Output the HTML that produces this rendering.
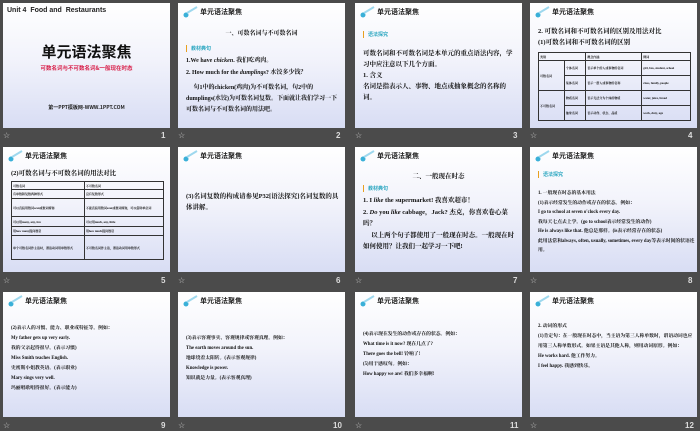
<!DOCTYPE html><html><head><meta charset="utf-8"><style>
*{margin:0;padding:0;box-sizing:border-box}
body{width:700px;height:431px;background:#4b4b4b;position:relative;overflow:hidden;font-family:"Liberation Serif","Noto Serif CJK SC","Noto Sans CJK SC",serif;color:#111}
.s{position:absolute;width:167px;height:125px;background:linear-gradient(#fff 0%,#f2f3fb 45%,#d8ddf4 100%);overflow:hidden;font-weight:bold}
.n{position:absolute;color:#ddd;font:bold 8px "Liberation Sans",sans-serif}
.st{position:absolute;color:#ccc;font:8px "Liberation Sans",sans-serif}
.h{position:absolute;left:22px;top:4px;font:bold 7px "Noto Sans CJK SC",sans-serif;color:#222}
.ic{position:absolute;left:4px;top:3px;width:16px;height:12px}
.t{position:absolute;font-size:6px;line-height:9px}
.tag{position:absolute;font:bold 5px "Noto Sans CJK SC",sans-serif;color:#2aa6c0;padding-left:4px;border-left:1.5px solid #e8a020}
table{border-collapse:collapse;position:absolute;font-size:3px}
td{border:0.7px solid #333;padding:1px;vertical-align:middle}
</style></head><body>
<div class="s" style="left:3px;top:3px">
<div style="position:absolute;left:4px;top:4px;font:bold 7px 'Liberation Sans',sans-serif;color:#222">Unit 4 &nbsp;Food and &nbsp;Restaurants</div>
<div style="position:absolute;left:0;width:167px;top:38px;text-align:center;font:bold 15px 'Noto Sans CJK SC',sans-serif;color:#111">单元语法聚焦</div>
<div style="position:absolute;left:0;width:167px;top:61px;text-align:center;font:bold 5.5px 'Noto Sans CJK SC',sans-serif;color:#d8204a">可数名词与不可数名词&amp;一般现在时态</div>
<div style="position:absolute;left:0;width:167px;top:101px;text-align:center;font:bold 5px 'Noto Sans CJK SC',sans-serif;color:#222">第一PPT模板网-WWW.1PPT.COM</div>
</div>
<div class="st" style="left:3px;top:131px">☆</div><div class="n" style="left:161px;top:131px">1</div>

<div class="s" style="left:178px;top:3px">
<svg class="ic"><circle cx="4" cy="9" r="2.5" fill="#3ab0d8"/><path d="M5 7 L15 1" stroke="#9ed8ee" stroke-width="2"/></svg>
<div class="h">单元语法聚焦</div>
<div class="t" style="left:0;width:167px;text-align:center;top:27px">一、可数名词与不可数名词</div>
<div class="tag" style="left:8px;top:42px">教材典句</div>
<div class="t" style="left:8px;top:54px">1.We have <i>chicken</i>. 我们吃鸡肉。</div>
<div class="t" style="left:8px;top:66px">2. How much for the <i>dumplings</i>? 水饺多少钱？</div>
<div class="t" style="left:8px;top:80px;width:155px;line-height:11px">&nbsp;&nbsp;&nbsp;&nbsp;&nbsp;句1中的chicken(鸡肉)为不可数名词，句2中的dumplings(水饺)为可数名词复数。下面就让我们学习一下可数名词与不可数名词的用法吧。</div>
</div>
<div class="st" style="left:178px;top:131px">☆</div><div class="n" style="left:336px;top:131px">2</div>

<div class="s" style="left:355px;top:3px">
<svg class="ic"><circle cx="4" cy="9" r="2.5" fill="#3ab0d8"/><path d="M5 7 L15 1" stroke="#9ed8ee" stroke-width="2"/></svg>
<div class="h">单元语法聚焦</div>
<div class="tag" style="left:8px;top:28px">语法探究</div>
<div class="t" style="left:8px;top:45px;width:155px;line-height:11px;font-size:6.5px">可数名词和不可数名词是本单元的重点语法内容，学习中应注意以下几个方面。<br>1. 含义<br>名词是指表示人、事物、地点或抽象概念的名称的词。</div>
</div>
<div class="st" style="left:355px;top:131px">☆</div><div class="n" style="left:513px;top:131px">3</div>

<div class="s" style="left:530px;top:3px">
<svg class="ic"><circle cx="4" cy="9" r="2.5" fill="#3ab0d8"/><path d="M5 7 L15 1" stroke="#9ed8ee" stroke-width="2"/></svg>
<div class="h">单元语法聚焦</div>
<div class="t" style="left:8px;top:24px;font-size:6.5px">2. 可数名词和不可数名词的区别及用法对比</div>
<div class="t" style="left:8px;top:35px;font-size:6.5px">(1)可数名词和不可数名词的区别</div>
<table style="left:8px;top:49px;width:153px;height:69px"><tr style="height:8px"><td colspan="2">类别</td><td>概念内涵</td><td>例词</td></tr>
<tr><td rowspan="2">可数名词</td><td>个体名词</td><td>表示单个的人或事物的名词</td><td>girl, bus, student, school</td></tr>
<tr><td>集体名词</td><td>表示一群人或事物的名称</td><td>class, family, people</td></tr>
<tr><td rowspan="2">不可数名词</td><td>物质名词</td><td>表示无法分为个体的物质</td><td>water, juice, bread</td></tr>
<tr><td>抽象名词</td><td>表示动作、状态、品质</td><td>work, duty, age</td></tr></table>
</div>
<div class="st" style="left:530px;top:131px">☆</div><div class="n" style="left:688px;top:131px">4</div>

<div class="s" style="left:3px;top:147px">
<svg class="ic"><circle cx="4" cy="9" r="2.5" fill="#3ab0d8"/><path d="M5 7 L15 1" stroke="#9ed8ee" stroke-width="2"/></svg>
<div class="h">单元语法聚焦</div>
<div class="t" style="left:8px;top:22px;font-size:6.5px">(2)可数名词与不可数名词的用法对比</div>
<table style="left:8px;top:34px;width:153px;height:79px"><tr style="height:8px"><td>可数名词</td><td>不可数名词</td></tr>
<tr style="height:9px"><td>有单数和复数两种形式</td><td>没有复数形式</td></tr>
<tr style="height:18px"><td>可以直接用数词a/an或数词修饰</td><td>不能直接用数词a/an或数词修饰，可以借助单位词</td></tr>
<tr style="height:10px"><td>可以用many, any, few</td><td>可以用much, any, little</td></tr>
<tr style="height:9px"><td>用how many提问数量</td><td>用how much提问数量</td></tr>
<tr><td>单个可数名词作主语时，谓语动词用单数形式</td><td>不可数名词作主语，谓语动词用单数形式</td></tr></table>
</div>
<div class="st" style="left:3px;top:276px">☆</div><div class="n" style="left:161px;top:276px">5</div>

<div class="s" style="left:178px;top:147px">
<svg class="ic"><circle cx="4" cy="9" r="2.5" fill="#3ab0d8"/><path d="M5 7 L15 1" stroke="#9ed8ee" stroke-width="2"/></svg>
<div class="h">单元语法聚焦</div>
<div class="t" style="left:8px;top:44px;width:155px;line-height:11px;font-size:6.5px">(3)名词复数的构成请参见P32[语法探究]名词复数的具体讲解。</div>
</div>
<div class="st" style="left:178px;top:276px">☆</div><div class="n" style="left:336px;top:276px">6</div>

<div class="s" style="left:355px;top:147px">
<svg class="ic"><circle cx="4" cy="9" r="2.5" fill="#3ab0d8"/><path d="M5 7 L15 1" stroke="#9ed8ee" stroke-width="2"/></svg>
<div class="h">单元语法聚焦</div>
<div class="t" style="left:0;width:167px;text-align:center;top:25px;font-size:6.5px">二、一般现在时态</div>
<div class="tag" style="left:8px;top:38px">教材典句</div>
<div class="t" style="left:8px;top:48px;width:155px;line-height:11.5px;font-size:6.5px">1. I <i>like</i> the supermarket! 我喜欢超市！<br>2. <i>Do</i> you <i>like</i> cabbage，Jack? 杰克，你喜欢卷心菜吗？<br>&nbsp;&nbsp;&nbsp;&nbsp;&nbsp;以上两个句子都使用了一般现在时态。一般现在时如何使用？让我们一起学习一下吧!</div>
</div>
<div class="st" style="left:355px;top:276px">☆</div><div class="n" style="left:513px;top:276px">7</div>

<div class="s" style="left:530px;top:147px">
<svg class="ic"><circle cx="4" cy="9" r="2.5" fill="#3ab0d8"/><path d="M5 7 L15 1" stroke="#9ed8ee" stroke-width="2"/></svg>
<div class="h">单元语法聚焦</div>
<div class="tag" style="left:8px;top:24px">语法探究</div>
<div class="t" style="left:8px;top:42px;width:157px;line-height:9.5px;font-size:4.8px">1. 一般现在时态的基本用法<br>(1)表示经常发生的动作或存在的状态。例如：<br>I go to school at seven o'clock every day.<br>我每天七点去上学。(go to school表示经常发生的动作)<br>He is always like that. 他总是那样。(is表示经常存在的状态)<br>此用法常和always, often, usually, sometimes, every day等表示时间的状语连用。</div>
</div>
<div class="st" style="left:530px;top:276px">☆</div><div class="n" style="left:688px;top:276px">8</div>

<div class="s" style="left:3px;top:292px">
<svg class="ic"><circle cx="4" cy="9" r="2.5" fill="#3ab0d8"/><path d="M5 7 L15 1" stroke="#9ed8ee" stroke-width="2"/></svg>
<div class="h">单元语法聚焦</div>
<div class="t" style="left:8px;top:32px;line-height:10px;font-size:4.8px">(2)表示人的习惯、能力、职业或特征等。例如：<br>My father gets up very early.<br>我的父亲起得很早。(表示习惯)<br>Miss Smith teaches English.<br>史密斯小姐教英语。(表示职业)<br>Mary sings very well.<br>玛丽唱歌唱得很好。(表示能力)</div>
</div>
<div class="st" style="left:3px;top:421px">☆</div><div class="n" style="left:161px;top:421px">9</div>

<div class="s" style="left:178px;top:292px">
<svg class="ic"><circle cx="4" cy="9" r="2.5" fill="#3ab0d8"/><path d="M5 7 L15 1" stroke="#9ed8ee" stroke-width="2"/></svg>
<div class="h">单元语法聚焦</div>
<div class="t" style="left:8px;top:42px;line-height:10px;font-size:4.8px">(3)表示客观事实、客观规律或客观真理。例如：<br>The earth moves around the sun.<br>地球绕着太阳转。(表示客观规律)<br>Knowledge is power.<br>知识就是力量。(表示客观真理)</div>
</div>
<div class="st" style="left:178px;top:421px">☆</div><div class="n" style="left:333px;top:421px">10</div>

<div class="s" style="left:355px;top:292px">
<svg class="ic"><circle cx="4" cy="9" r="2.5" fill="#3ab0d8"/><path d="M5 7 L15 1" stroke="#9ed8ee" stroke-width="2"/></svg>
<div class="h">单元语法聚焦</div>
<div class="t" style="left:8px;top:38px;line-height:10px;font-size:4.8px">(4)表示现在发生的动作或存在的状态。例如：<br>What time is it now? 现在几点了?<br>There goes the bell! 铃响了!<br>(5)用于感叹句。例如：<br>How happy we are! 我们多幸福啊!</div>
</div>
<div class="st" style="left:355px;top:421px">☆</div><div class="n" style="left:510px;top:421px">11</div>

<div class="s" style="left:530px;top:292px">
<svg class="ic"><circle cx="4" cy="9" r="2.5" fill="#3ab0d8"/><path d="M5 7 L15 1" stroke="#9ed8ee" stroke-width="2"/></svg>
<div class="h">单元语法聚焦</div>
<div class="t" style="left:8px;top:30px;width:157px;line-height:10px;font-size:4.8px">2. 动词的形式<br>(1)肯定句：在一般现在时态中，当主语为第三人称单数时，谓语动词也应用第三人称单数形式。如果主语是其他人称，则用动词原形。例如：<br>He works hard. 他工作努力。<br>I feel happy. 我感到快乐。</div>
</div>
<div class="st" style="left:530px;top:421px">☆</div><div class="n" style="left:685px;top:421px">12</div>
</body></html>
